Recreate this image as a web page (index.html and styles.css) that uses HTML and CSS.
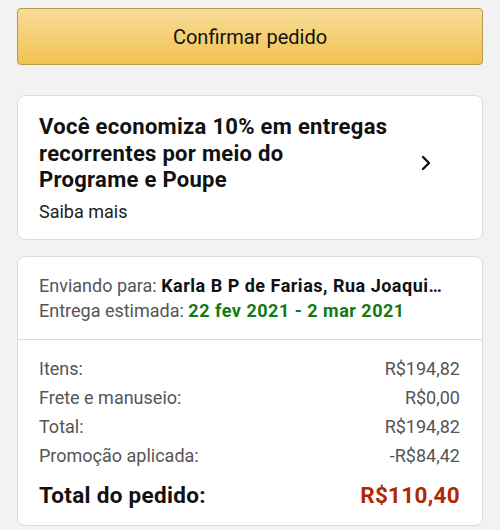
FILE: index.html
```html
<!DOCTYPE html>
<html lang="pt-BR">
<head>
    <meta charset="UTF-8">
    <meta name="viewport" content="width=device-width, initial-scale=1.0">
    <title>Revisar pedido</title>
    <link rel="stylesheet" href="styles.css">
</head>
<body>

<div class="page">
    <button class="confirm-button">Confirmar pedido</button>

    <div class="card promo-card">
        <div class="promo-text">
            <h3>Você economiza 10% em entregas recorrentes por meio do<br>Programe e Poupe</h3>
            <span class="promo-link">Saiba mais</span>
        </div>
        <svg class="chevron" width="14" height="18" viewBox="0 0 14 18">
            <path d="M4 3 L10 9 L4 15" fill="none" stroke="#111" stroke-width="2.4" stroke-linecap="round" stroke-linejoin="round"/>
        </svg>
    </div>

    <div class="card summary-card">
        <div class="shipping">
            <div class="line"><span class="label">Enviando para: </span><b>Karla B P de Farias, Rua Joaqui…</b></div>
            <div class="line"><span class="label">Entrega estimada: </span><b class="green">22 fev 2021 - 2 mar 2021</b></div>
        </div>
        <div class="totals">
            <div class="row"><span>Itens:</span><span>R$194,82</span></div>
            <div class="row"><span>Frete e manuseio:</span><span>R$0,00</span></div>
            <div class="row"><span>Total:</span><span>R$194,82</span></div>
            <div class="row"><span>Promoção aplicada:</span><span>-R$84,42</span></div>
            <div class="row grand"><span>Total do pedido:</span><span class="price">R$110,40</span></div>
        </div>
    </div>
</div>

</body>
</html>
```

FILE: styles.css
```css
/* Grundlayout */
body {
    margin: 0;
    background-color: #f2f2f2;
    font-family: Roboto, "Noto Sans", sans-serif;
    color: #111;
}
.page {
    padding: 8px 17px;
    display: flex;
    flex-direction: column;
}
/* Gelber Button */
.confirm-button {
    height: 57px;
    width: 100%;
    border: 1px solid #b69a4e;
    border-radius: 4px;
    background: linear-gradient(#f8dd99, #f0c250);
    font-family: Roboto, sans-serif;
    font-size: 20px;
    color: #111;
    margin-bottom: 30px;
}
/* Karten */
.card {
    background: white;
    border: 1px solid #dcdcdc;
    border-radius: 8px;
    margin-bottom: 16px;
}
.promo-card {
    display: flex;
    align-items: center;
    padding: 18px 22px 15px 21px;
}
.promo-text {
    flex: 1;
}
.promo-text h3 {
    margin: 0 0 5px 0;
    font-size: 22px;
    line-height: 26.5px;
    font-weight: bold;
    letter-spacing: 0.3px;
    max-width: 360px;
}
.promo-link {
    font-size: 18px;
    line-height: 25px;
    color: #222;
}
.chevron {
    margin-right: 27px;
    margin-top: -12px;
}
/* Versand und Summen */
.shipping {
    padding: 16px 22px 16px 21px;
    border-bottom: 1px solid #dcdcdc;
}
.line {
    font-size: 18px;
    line-height: 25px;
    white-space: nowrap;
}
.line b {
    letter-spacing: 0.5px;
}
.label {
    color: #555;
}
.green {
    color: #117a11;
}
.totals {
    padding: 14px 22px 15px 21px;
}
.row {
    display: flex;
    justify-content: space-between;
    font-size: 18px;
    line-height: 29px;
    color: #555;
}
.row.grand {
    margin-top: 10px;
    font-size: 22.5px;
    line-height: 30px;
    font-weight: bold;
    letter-spacing: 0.3px;
    color: #111;
}
.price {
    color: #b12704;
}
```
